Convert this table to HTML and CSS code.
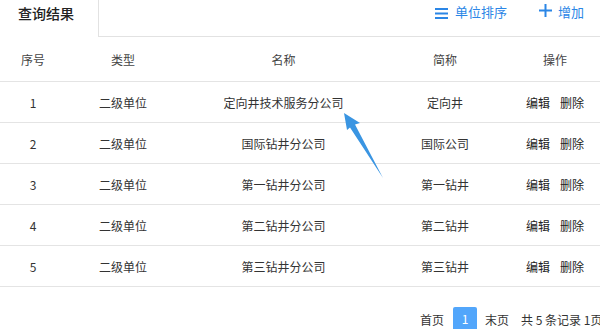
FILE: index.html
```html
<!DOCTYPE html>
<html lang="zh">
<head>
<meta charset="utf-8">
<link rel="stylesheet" href="styles.css">
</head>
<body>
<div class="page">
  <div class="toolbar">
    <div class="tab">查询结果</div>
    <div class="tools">
      <a class="tool sort">
        <svg width="14" height="12" viewBox="0 0 14 12"><rect x="0" y="1" width="13" height="2" fill="#2b86e6"/><rect x="0" y="5.5" width="13" height="2" fill="#2b86e6"/><rect x="0" y="10" width="13" height="2" fill="#2b86e6"/></svg>
        <span>单位排序</span>
      </a>
      <a class="tool add">
        <svg width="13" height="13" viewBox="0 0 13 13"><rect x="5.5" y="0" width="2" height="13" fill="#2b86e6"/><rect x="0" y="5.5" width="13" height="2" fill="#2b86e6"/></svg>
        <span>增加</span>
      </a>
    </div>
  </div>
  <table class="grid">
    <colgroup>
      <col class="c1"><col class="c2"><col class="c3"><col class="c4"><col class="c5">
    </colgroup>
    <thead>
      <tr><th>序号</th><th>类型</th><th>名称</th><th>简称</th><th>操作</th></tr>
    </thead>
    <tbody>
      <tr><td>1</td><td>二级单位</td><td>定向井技术服务分公司</td><td>定向井</td><td class="ops"><a>编辑</a><a>删除</a></td></tr>
      <tr><td>2</td><td>二级单位</td><td>国际钻井分公司</td><td>国际公司</td><td class="ops"><a>编辑</a><a>删除</a></td></tr>
      <tr><td>3</td><td>二级单位</td><td>第一钻井分公司</td><td>第一钻井</td><td class="ops"><a>编辑</a><a>删除</a></td></tr>
      <tr><td>4</td><td>二级单位</td><td>第二钻井分公司</td><td>第二钻井</td><td class="ops"><a>编辑</a><a>删除</a></td></tr>
      <tr><td>5</td><td>二级单位</td><td>第三钻井分公司</td><td>第三钻井</td><td class="ops"><a>编辑</a><a>删除</a></td></tr>
    </tbody>
  </table>
  <div class="pager">
    <span class="plink">首页</span>
    <span class="pnum">1</span>
    <span class="plink">末页</span>
    <span class="ptotal">共 5 条记录 1页</span>
  </div>
  <svg class="arrow" width="50" height="75" viewBox="0 0 50 75">
    <polygon points="6,5 22,15 17,16.5 45,70 12,19.5 9,22" fill="#3a95e2"/>
  </svg>
</div>
</body>
</html>
```

FILE: styles.css
```css
html, body {
  margin: 0;
  padding: 0;
  background: #fff;
  overflow: hidden;
}
body {
  font-family: "Noto Sans CJK SC", "Noto Sans", sans-serif;
  color: #333;
  font-size: 12px;
}
.page {
  position: relative;
  width: 607px;
}
.toolbar {
  display: flex;
  height: 37px;
}
.tab {
  width: 99px;
  height: 37px;
  box-sizing: border-box;
  border-right: 1px solid #e2e2e2;
  font-size: 14px;
  font-weight: 500;
  color: #222;
  padding: 2px 0 0 18px;
  line-height: 22px;
}
.tools {
  flex: 1;
  display: flex;
  justify-content: flex-end;
  gap: 32px;
  padding: 2px 23px 0 0;
  border-bottom: 1px solid #e2e2e2;
  align-items: flex-start;
}
.tool {
  display: flex;
  align-items: center;
  gap: 6px;
  color: #2b86e6;
  font-size: 13px;
  line-height: 20px;
}
.tool.sort svg { margin-top: 1px; }
.tool.add svg { margin-top: -3px; }
.grid {
  width: 607px;
  border-collapse: collapse;
  table-layout: fixed;
}
.c1 { width: 66px; }
.c2 { width: 114px; }
.c3 { width: 207px; }
.c4 { width: 116px; }
.c5 { width: 104px; }
.grid th, .grid td {
  text-align: center;
  font-weight: normal;
  border-bottom: 1px solid #e4e4e4;
  padding: 0;
  white-space: nowrap;
}
.grid th {
  height: 44px;
  color: #444;
}
.grid td {
  height: 40px;
}
.ops a {
  color: #222;
  margin: 0 5px;
}
.pager {
  display: flex;
  align-items: center;
  padding: 20px 0 0 420px;
  height: 24px;
  color: #333;
}
.plink { margin-right: 9px; }
.pnum {
  width: 24px;
  height: 24px;
  line-height: 24px;
  text-align: center;
  background: #52a6fb;
  color: #fff;
  border-radius: 2px;
  margin-right: 8px;
}
.ptotal { margin-left: 3px; white-space: nowrap; }
.arrow {
  position: absolute;
  left: 338px;
  top: 108px;
}
```
